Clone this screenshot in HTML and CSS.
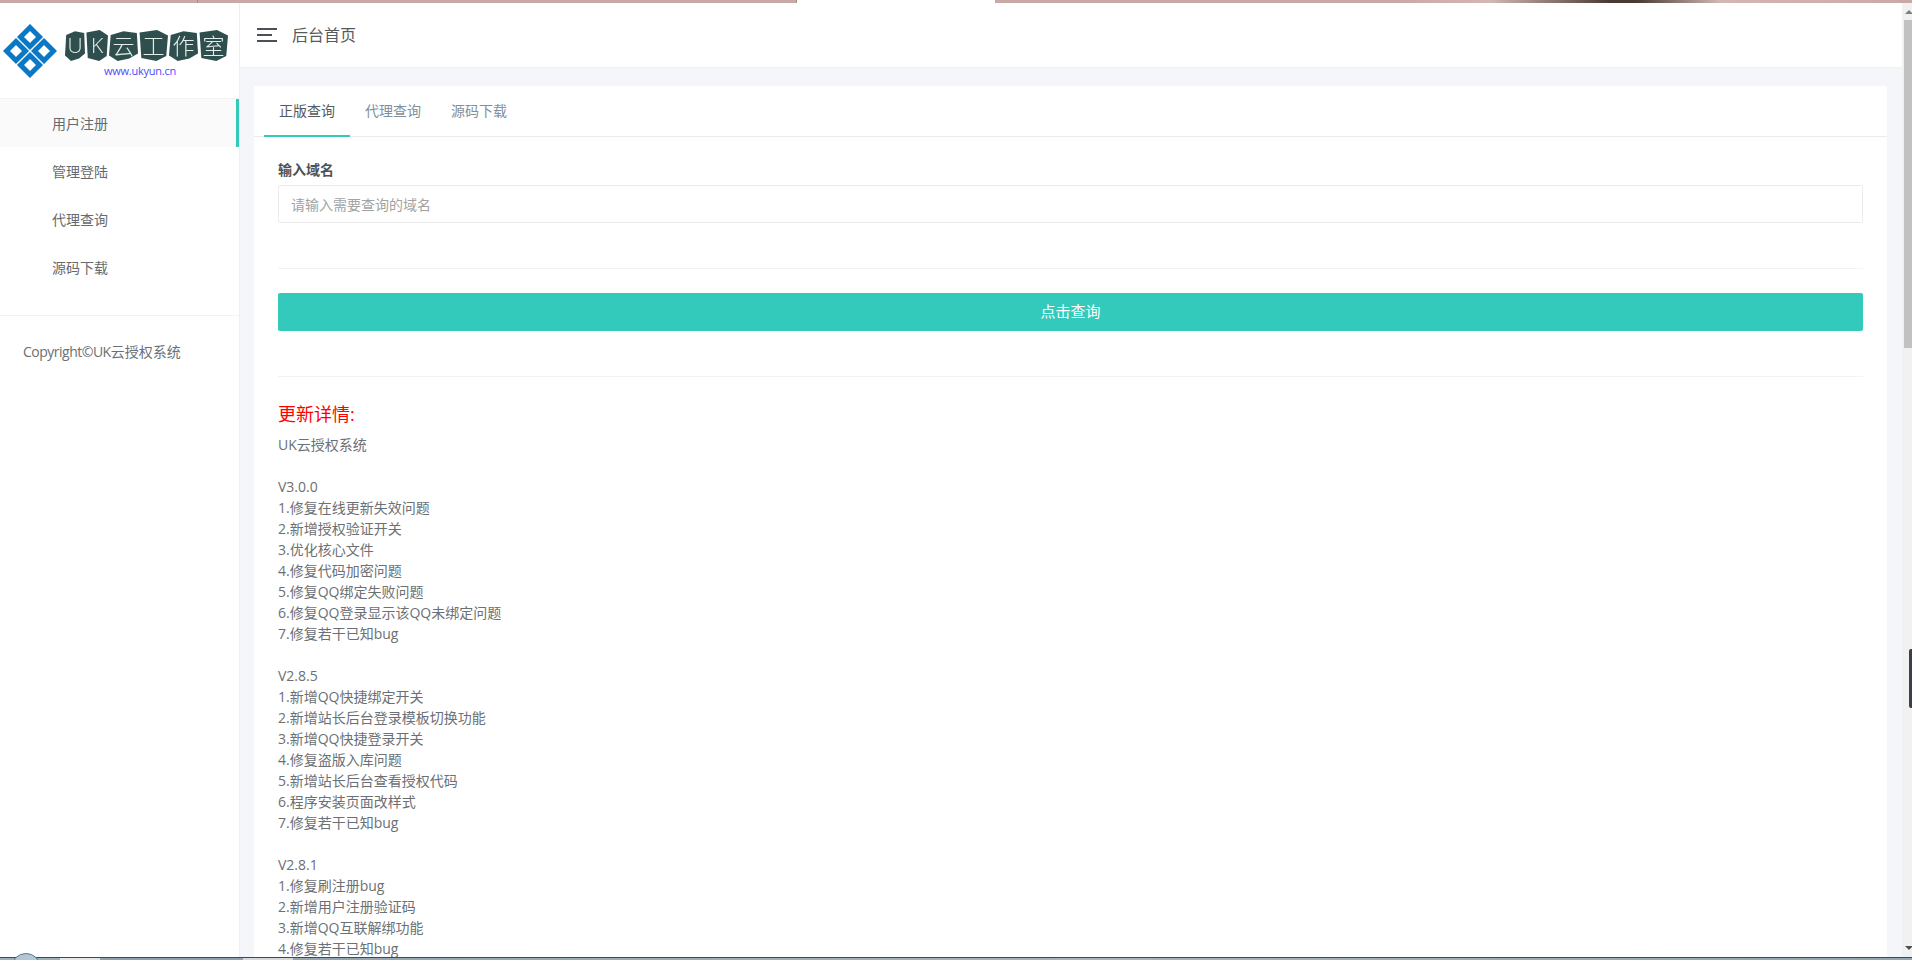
FILE: index.html
```html
<!DOCTYPE html>
<html lang="zh-CN">
<head>
<meta charset="utf-8">
<title>后台首页</title>
<link rel="stylesheet" href="styles.css">
</head>
<body>
<div class="page">
  <div class="top-strip">
    <div class="strip-a"></div>
    <div class="strip-b"></div>
    <div class="strip-gap"></div>
    <div class="strip-c"></div>
  </div>
  <div class="main">
    <aside class="sidebar">
      <div class="logo">
        <svg class="logo-mark" viewBox="0 0 54 54" width="54" height="54" aria-hidden="true">
          <g fill="none" stroke="#0b78c6" stroke-width="5" stroke-linejoin="miter">
            <path d="M27 3.500 L36.500 13 L27 22.500 L17.500 13 Z"/>
            <path d="M3.500 27 L13 17.500 L22.500 27 L13 36.500 Z"/>
            <path d="M50.500 27 L41 17.500 L31.500 27 L41 36.500 Z"/>
            <path d="M27 50.500 L36.500 41 L27 31.500 L17.500 41 Z"/>
          </g>
          <path d="M24 24 L30 30 M30 24 L24 30" fill="none" stroke="#fff" stroke-width="1"/>
        </svg>
        <div class="logo-text">
          <div class="logo-title">
            <span class="tile tile-u">U</span><span class="tile tile-k">K</span><span class="tile">云</span><span class="tile">工</span><span class="tile">作</span><span class="tile">室</span>
          </div>
          <div class="logo-url">www.ukyun.cn</div>
        </div>
      </div>
      <nav class="nav">
        <a class="nav-item nav-item-active">用户注册</a>
        <a class="nav-item">管理登陆</a>
        <a class="nav-item">代理查询</a>
        <a class="nav-item">源码下载</a>
      </nav>
      <div class="copyright"><span class="copyright-latin">Copyright©UK</span>云授权系统</div>
    </aside>
    <div class="content">
      <header class="topbar">
        <svg class="menu-icon" viewBox="0 0 20 14" width="20" height="14" aria-hidden="true">
          <path d="M0 1 H20 M0 7 H15 M0 13 H20" stroke="#4a5056" stroke-width="2" fill="none"/>
        </svg>
        <div class="topbar-title">后台首页</div>
      </header>
      <div class="content-body">
        <section class="card">
          <div class="tabs">
            <a class="tab tab-active">正版查询</a>
            <a class="tab">代理查询</a>
            <a class="tab">源码下载</a>
          </div>
          <div class="card-body">
            <label class="field-label" for="domain">输入域名</label>
            <input class="field-input" id="domain" type="text" placeholder="请输入需要查询的域名">
            <hr class="rule rule-upper">
            <button class="submit" type="button">点击查询</button>
            <hr class="rule rule-lower">
            <h4 class="log-title">更新详情:</h4>
            <div class="log">
              <p class="log-block">UK云授权系统</p>
              <p class="log-block">V3.0.0<br>1.修复在线更新失效问题<br>2.新增授权验证开关<br>3.优化核心文件<br>4.修复代码加密问题<br>5.修复QQ绑定失败问题<br>6.修复QQ登录显示该QQ未绑定问题<br>7.修复若干已知bug</p>
              <p class="log-block">V2.8.5<br>1.新增QQ快捷绑定开关<br>2.新增站长后台登录模板切换功能<br>3.新增QQ快捷登录开关<br>4.修复盗版入库问题<br>5.新增站长后台查看授权代码<br>6.程序安装页面改样式<br>7.修复若干已知bug</p>
              <p class="log-block">V2.8.1<br>1.修复刷注册bug<br>2.新增用户注册验证码<br>3.新增QQ互联解绑功能<br>4.修复若干已知bug</p>
            </div>
          </div>
        </section>
      </div>
    </div>
    <div class="scrollbar">
      <div class="scroll-arrow scroll-arrow-up"></div>
      <div class="scroll-thumb"></div>
      <div class="scroll-handle"></div>
      <div class="scroll-arrow scroll-arrow-down"></div>
    </div>
  </div>
  <div class="bottom-strip">
    <div class="orb"></div>
    <div class="seg seg-blue"></div>
    <div class="seg seg-white"></div>
    <div class="seg seg-grey"></div>
    <div class="seg seg-light"></div>
    <div class="seg seg-fill"></div>
  </div>
</div>
</body>
</html>
```

FILE: styles.css
```css
* { box-sizing: border-box; }
html, body { margin: 0; padding: 0; height: 100%; overflow: hidden; background: #fff; }
body {
  font-family: "Open Sans", "Noto Sans CJK SC", sans-serif;
  font-size: 14px;
  line-height: 21px;
  color: #6b7075;
}
.page { width: 1912px; height: 960px; display: flex; flex-direction: column; overflow: hidden; position: relative; }

/* top strip */
.top-strip { height: 3px; flex: none; display: flex; }
.strip-a { width: 198px; background: #c9a9a6; border-right: 1px solid #a98e8b; }
.strip-b { width: 599px; background: #c9a9a6; border-right: 1px solid #a98e8b; }
.strip-gap { width: 198px; background: #fff; }
.strip-c {
  flex: 1;
  background: linear-gradient(90deg, #c9a9a6 0, #c9a9a6 44%, #d3b7b4 54%, #4a3a34 67%, #4a3a34 70%, #d3b7b4 79%, #c9a9a6 100%);
}

/* frame */
.main { flex: 1; min-height: 0; display: flex; }

/* sidebar */
.sidebar { width: 240px; flex: none; background: #fff; border-right: 1px solid #f0f0f2; display: flex; flex-direction: column; }
.logo { height: 96px; flex: none; display: flex; padding: 21px 0 0 3px; border-bottom: 1px solid #f3f3f3; }
.logo-mark { flex: none; }
.logo-text { margin-left: 8px; width: 164px; }
.logo-title { display: flex; height: 31px; margin-top: 6px; gap: 1px; filter: blur(0.4px); }
.tile {
  width: 29px;
  height: 31px;
  background: #2f4f4f;
  color: #e6eeec;
  font-size: 22px;
  font-weight: 300;
  line-height: 30px;
  text-align: center;
  clip-path: polygon(6% 16%, 50% 4%, 96% 10%, 100% 76%, 70% 92%, 30% 100%, 0 82%);
}
.tile:nth-child(even) { clip-path: polygon(2% 8%, 62% 0, 100% 18%, 94% 84%, 60% 100%, 8% 90%); }
.tile-u { width: 20px; font-size: 21px; }
.tile-k { width: 22px; font-size: 21px; }
.logo-url { margin-top: 2px; padding-left: 39px; font-size: 11px; line-height: 15px; letter-spacing: -0.25px; color: #4a4aff; white-space: nowrap; }

.nav { padding-bottom: 24px; border-bottom: 1px solid #f3f3f3; }
.nav-item { display: block; height: 48px; line-height: 50px; padding-left: 52px; color: #666a6e; }
.nav-item-active { background: #fafafa; border-right: 3px solid #33cabb; }
.copyright { padding: 25px 0 0 23px; color: #6b7075; white-space: nowrap; }
.copyright-latin { letter-spacing: -0.5px; }

/* content */
.content { flex: 1; min-width: 0; display: flex; flex-direction: column; background: #f5f6fa; }
.topbar { height: 64px; flex: none; background: #fff; display: flex; align-items: center; padding: 0 0 0 17px; box-shadow: 0 1px 2px rgba(0, 0, 0, .03); }
.menu-icon { flex: none; }
.topbar-title { margin-left: 15px; font-size: 16px; color: #555a60; }
.content-body { flex: 1; min-height: 0; padding: 19px 15px 0 14px; overflow: hidden; }

.card { background: #fff; height: 100%; }
.tabs { height: 51px; display: flex; padding-left: 10px; border-bottom: 1px solid #ebebeb; }
.tab { height: 51px; line-height: 49px; padding: 0 15px; color: #7f8f9c; }
.tab-active { color: #555a60; border-bottom: 2px solid #33cabb; }
.card-body { padding: 22px 24px 0 24px; }
.field-label { display: block; font-weight: 700; color: #4d5257; margin-bottom: 5px; }
.field-input {
  display: block;
  width: 100%;
  height: 38px;
  padding: 0 12px;
  border: 1px solid #ebebeb;
  border-radius: 2px;
  background: #fff;
  font: inherit;
  color: #6b7075;
  outline: none;
}
.field-input::placeholder { color: #a3a3a3; opacity: 1; }
.rule { height: 1px; border: 0; background: #f3f3f3; margin: 0; }
.rule-upper { margin: 45px 0 24px; }
.rule-lower { margin: 45px 0 24px; }
.submit {
  display: block;
  width: 100%;
  height: 38px;
  padding: 0 0 2px;
  border: 0;
  border-radius: 2px;
  background: #33cabb;
  color: #fff;
  font: inherit;
  font-size: 15px;
}
.log-title { margin: 0 0 6px; font-size: 18px; line-height: 27px; font-weight: 400; color: #f00; }
.log-block { margin: 0 0 21px; }

/* scrollbar */
.scrollbar { width: 10px; flex: none; background: #f1f1f1; display: flex; flex-direction: column; align-items: flex-end; position: relative; padding-top: 17px; }
.scroll-thumb { width: 8px; height: 328px; background: #c1c1c1; flex: none; }
.scroll-handle { position: absolute; top: 646px; right: 0; width: 3px; height: 59px; background: #3a3f4c; border-radius: 2px 0 0 2px; }
.scroll-arrow { position: absolute; right: -1px; width: 0; height: 0; border-left: 4px solid transparent; border-right: 4px solid transparent; }
.scroll-arrow-up { top: 7px; border-bottom: 4px solid #7d7d7d; }
.scroll-arrow-down { bottom: 7px; border-top: 4px solid #505050; }

/* bottom strip */
.bottom-strip { height: 3px; flex: none; display: flex; position: relative; background: #8da2ae; border-top: 1px solid #3c4a55; }
.seg { height: 100%; }
.seg-blue { width: 60px; background: #9cb0bb; }
.seg-white { width: 40px; background: #e4e8ea; }
.seg-grey { width: 143px; background: #8da2ae; }
.seg-light { width: 50px; background: #d2d8dc; }
.seg-fill { flex: 1; background: linear-gradient(90deg, #93a6b1, #a7b5bd 50%, #93a6b1); }
.orb { position: absolute; left: 11px; top: -5px; width: 30px; height: 30px; border-radius: 50%; background: #b3c6d3; border: 1px solid #59788f; }
```
